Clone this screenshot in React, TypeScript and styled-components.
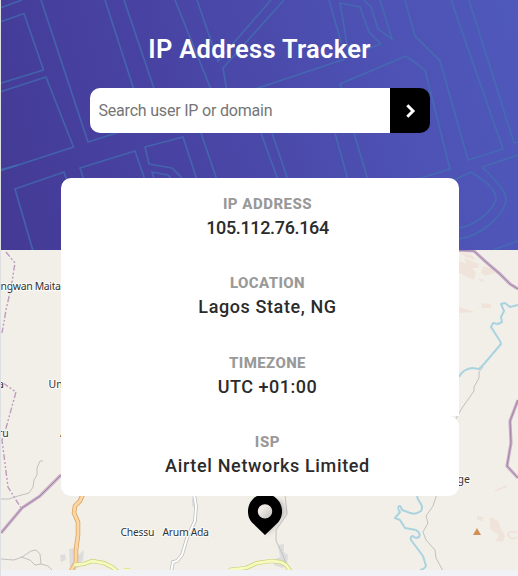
import React from "react";
import styled, { createGlobalStyle } from "styled-components";

const GlobalStyle = createGlobalStyle`
  * { box-sizing: border-box; }
  body {
    margin: 0;
    background: #f0f2f5;
    font-family: Roboto, "Open Sans", sans-serif;
  }
`;

const Page = styled.main`
  min-height: 576px;
  border-left: 1px solid #dedfe3;
  overflow: hidden;
`;

const Header = styled.header`
  position: relative;
  height: 250px;
  display: flex;
  flex-direction: column;
  align-items: center;
  background: linear-gradient(75deg, #443a95 0%, #4843a3 35%, #4e54b6 80%, #4f58bb 100%);
`;

const Streets = styled.svg`
  position: absolute;
  inset: 0;
  fill: none;
  stroke: #4373b3;
  stroke-width: 1.7;
  stroke-opacity: 0.68;
`;

const Title = styled.h1`
  position: relative;
  margin: 33px 0 23px;
  height: 32px;
  line-height: 32px;
  font-size: 25.5px;
  font-weight: 600;
  letter-spacing: 0.3px;
  color: #fff;
`;

const SearchForm = styled.form`
  position: relative;
  display: flex;
  width: 340px;
  height: 45px;
  border-radius: 10px;
  overflow: hidden;
`;

const SearchInput = styled.input`
  flex: 1;
  min-width: 0;
  border: 0;
  padding: 0 9px;
  background: #fff;
  font: 400 16px Roboto, sans-serif;
  letter-spacing: -0.2px;
  color: #222;
  &::placeholder { color: #757575; opacity: 1; }
`;

const SearchButton = styled.button`
  display: grid;
  place-items: center;
  width: 40px;
  padding: 1px 0 0 2px;
  border: 0;
  background: #000;
`;

const Card = styled.section`
  position: relative;
  z-index: 1;
  width: 398px;
  height: 318px;
  margin: -72px 0 0 60px;
`;

const Row = styled.div<{ $edge?: "first" | "last" }>`
  height: ${(p) => (p.$edge === "first" ? "79px" : p.$edge === "last" ? "80px" : "79.5px")};
  padding: ${(p) => (p.$edge === "first" ? "17px" : "17.2px")} 0 0 15px;
  text-align: center;
  background: #fff;
  border-radius: ${(p) =>
    p.$edge === "first" ? "10px 10px 0 0" : p.$edge === "last" ? "0 10px 10px 10px" : "0"};
`;

const Label = styled.h2<{ $spacing: number }>`
  margin: 0;
  height: 18px;
  line-height: 18px;
  font-size: 15px;
  font-weight: 800;
  color: #999;
  letter-spacing: ${(p) => p.$spacing}px;
`;

const Value = styled.p<{ $spacing: number }>`
  margin: 3.3px 0 0;
  height: 24px;
  line-height: 24px;
  font-size: 18px;
  font-weight: 500;
  color: #2b2b2b;
  letter-spacing: ${(p) => p.$spacing}px;
`;

const MapArea = styled.svg`
  display: block;
  margin-top: -246px;
  background: #f2efe9;
`;

const Place = styled.text`
  font: 10.5px "Noto Sans", sans-serif;
  fill: #333;
  stroke: #fff;
  stroke-width: 2px;
  stroke-opacity: 0.75;
  stroke-linejoin: round;
  paint-order: stroke;
`;

const River = styled.path`
  fill: none;
  stroke: #aad3df;
  stroke-width: 2;
  stroke-linejoin: round;
`;

const Track = styled.path`
  fill: none;
  stroke: #bbb;
  stroke-width: 0.9;
`;

const Border = styled.path`
  fill: none;
  stroke: #c9b1c8;
  stroke-width: 3.2;
`;

const BorderCore = styled.path`
  fill: none;
  stroke: #a681a8;
  stroke-width: 1;
`;

const District = styled.path`
  fill: none;
  stroke: #bd9bbd;
  stroke-width: 1.4;
  stroke-dasharray: 6 2 2 2 2 2;
`;

const Road = styled.path<{ $tone: string; $w: number }>`
  fill: none;
  stroke: ${(p) => p.$tone};
  stroke-width: ${(p) => p.$w};
`;

const streetLines = [
  "M0 8L22 0", "M0 22L24 13.500L43.500 70L0 83.500", "M0 92L46 77L73.500 147L0 171",
  "M41 0L88 142L145 124L105 0", "M124 0L164 118L216 102L175 0",
  "M197 0L218 61L271 0", "M284 0L223 68L228 98L345 59",
  "M0 170L18 165", "M33 251L15 189L64 172L68 184", "M84 180L80 168L135 151L145 180",
  "M197 180L183 137L145 147L149 164L172 168L184 180", "M155 182L152 172L168 175L174 182",
  "M190 98L201 133L217 180", "M329 0L341 42", "M381 44L369 32L360 7L340 3L346 38L349 55L381 44",
  "M364 0L371 7L378 29L392 39L380 0", "M405 0L415 36L440 61L468 160L503 149L451 0",
  "M469 0L514 143L518 142", "M345 98L340 84L406 56L425 70L450 169L418 179",
  "M261 133L278 180", "M272 133L288 180", "M335 133L348 180", "M354 133L368 180",
  "M518 155L482 167C500 184 506 192 506 200C504 214 484 235 459 239",
  "M454 180L471 172C490 184 496 191 496 199C493 211 474 226 459 228",
  "M493 250L518 241",
];

const details = [
  { label: "IP ADDRESS", value: "105.112.76.164", ls: 0.5, vs: -0.36 },
  { label: "LOCATION", value: "Lagos State, NG", ls: 0.4, vs: 0.6 },
  { label: "TIMEZONE", value: "UTC +01:00", ls: 0.4, vs: 0.5 },
  { label: "ISP", value: "Airtel Networks Limited", ls: 0.6, vs: 0.65 },
];

const leftBorder = "M1 533L22 508L40 496L61 475";
const eastBorder = "M451 250L474 251L486 262L500 274L510 284L518 289";
const farBorder = "M518 400L510 421L511 443L507 466L518 478";
const orangeRoad = "M83 494L80 501L75 506L74 513L78 522L78 535L76 550L76 562L71 571";
const yellowWest = "M74 565L84 564L92 561L104 563L112 567L118 572M124 570H130";
const yellowEast = "M229 570L246 568L257 563L271 561L281 562L286 565L291 572";
const whiteRoad = "M194 494L196 506L195 521L187 538L182 555L177 561L173 562L171 572";

function StreetPattern() {
  return (
    <Streets width="517" height="250" viewBox="1 0 517 250" aria-hidden="true">
      {streetLines.map((d) => <path key={d} d={d} />)}
    </Streets>
  );
}

function LocationMap() {
  return (
    <MapArea width="517" height="320" viewBox="1 250 517 320" role="img" aria-label="Map">
      <defs>
        <linearGradient id="hole" x1="0" y1="0" x2="1" y2="1">
          <stop offset="0.35" stopColor="#eeebe6" /><stop offset="1" stopColor="#bbb8b4" />
        </linearGradient>
        <filter id="soft" x="-50%" y="-50%" width="200%" height="200%">
          <feGaussianBlur stdDeviation="2.5" />
        </filter>
      </defs>
      <g fill="#efe3da">
        <path d="M459 252L472 255L476 260L466 257ZM459 261L470 265L476 273L474 280L459 273ZM464 258L479 264L478 268L469 268ZM483 266L498 271L486 276L481 273ZM478 278L485 280L480 282ZM459 307L475 312L459 313ZM481 303L491 304L491 308L482 308Z" />
        <path d="M477 516L484 517L482 521L477 520ZM490 517L498 521L501 529L505 535L503 542L496 541L499 535L490 529ZM495 490L507 485L507 487L495 492Z" />
        <path d="M517 532Q507 531 508 535Q512 541 517 537" fill="none" stroke="#efe3da" strokeWidth="2" />
      </g>
      <g fill="#ddd">
        <path d="M60 555L65 554L66 560L61 562ZM69 549L75 548V558L84 550L83 560L80 566L75 570H70Z" />
        <path d="M278 545L284 544L284 552L288 555L287 565L282 568L274 565V560L280 557ZM192 499L196 496V508L192 506ZM229 568L234 567L234 570H228Z" />
      </g>

      <District d="M6 252L15 263L11 288L6 310L2 333" strokeDasharray="3 2" />
      <District d="M3 383L16 392L6 428L2 440L8 487L21 508" />
      <Border d={leftBorder} /><BorderCore d={leftBorder} />
      <Border d={eastBorder} /><BorderCore d={eastBorder} />
      <Border d={farBorder} /><BorderCore d={farBorder} />

      <Track d="M1 499H9L18 496L29 493L33 487L34 480L37 475L37 468L40 461H43" />
      <Track d="M1 559L14 560L22 557L31 551L36 550L40 554L41 564L48 566L52 570M21 557L30 560L35 565L41 564" />
      <Track d="M483 367L479 372V378L474 387V391L462 408L454 422" />
      <Track d="M437 494L433 506L426 516L428 523L423 532L426 540L435 550L436 558L443 571" />
      <Track d="M285 494L287 514L276 530V541L283 555L286 564" />

      <River d="M518 305L510 307L505 303L501 304L504 311L501 317L502 322L498 324L493 323L491 327L500 341L501 344L484 364L479 369L472 368Q463 369 459 377" />
      <River d="M417 494C416 503 425 503 421 511C413 517 407 511 402 510C400 502 396 508 400 512L395 518L400 520L405 528L416 530Q421 533 419 537Q415 539 413 536Q410 536 411 540L423 556L426 566Q425 569 420 570" />

      <Road $tone="#bbb" $w={3.5} d={whiteRoad} /><Road $tone="#fff" $w={2} d={whiteRoad} />
      <Road $tone="#d8a25c" $w={4.5} d={orangeRoad} /><Road $tone="#fcd6a4" $w={3} d={orangeRoad} />
      <Road $tone="#c7cf71" $w={4.2} d={yellowWest} /><Road $tone="#f7fabf" $w={2.8} d={yellowWest} />
      <Road $tone="#c7cf71" $w={4.2} d={yellowEast} /><Road $tone="#f7fabf" $w={2.8} d={yellowEast} />
      <path d="M477 528L481 535H473Z" fill="#d08f55" />

      <Place x="0.500" y="290" textLength="60.500">ngwan Maita</Place>
      <Place x="-2" y="388">a</Place>
      <Place x="48.500" y="388">Un</Place>
      <Place x="-2" y="437">ru</Place>
      <Place x="60" y="437">A</Place>
      <Place x="457.500" y="483">ge</Place>
      <Place x="120.500" y="535.500" textLength="34">Chessu</Place>
      <Place x="162.500" y="535.500" textLength="46.500">Arum Ada</Place>

      <path d="M267 535L285 513L281 500L270 506Z" fill="#000" opacity="0.25" filter="url(#soft)" />
      <circle cx="265" cy="511.500" r="8" fill="url(#hole)" />
      <path fillRule="evenodd" d="M265 535L252 522.500C248 518 248 513 248 511A17 17 0 0 1 282 511C282 513 282 518 278 522.500ZM265 504.200A7.200 7.200 0 1 0 265 518.600A7.200 7.200 0 1 0 265 504.200Z" />
    </MapArea>
  );
}

export default function App() {
  return (
    <Page>
      <GlobalStyle />
      <Header>
        <StreetPattern />
        <Title>IP Address Tracker</Title>
        <SearchForm onSubmit={(e) => e.preventDefault()}>
          <SearchInput placeholder="Search user IP or domain" />
          <SearchButton type="submit" aria-label="Search">
            <svg width="12" height="14" viewBox="0 0 12 14" fill="none" stroke="#fff" strokeWidth="3">
              <path d="M2.300 1.300L8 7L2.300 12.700" />
            </svg>
          </SearchButton>
        </SearchForm>
      </Header>
      <Card>
        {details.map((d, i) => (
          <Row key={d.label} $edge={i === 0 ? "first" : i === details.length - 1 ? "last" : undefined}>
            <Label $spacing={d.ls}>{d.label}</Label>
            <Value $spacing={d.vs}>{d.value}</Value>
          </Row>
        ))}
      </Card>
      <LocationMap />
    </Page>
  );
}
